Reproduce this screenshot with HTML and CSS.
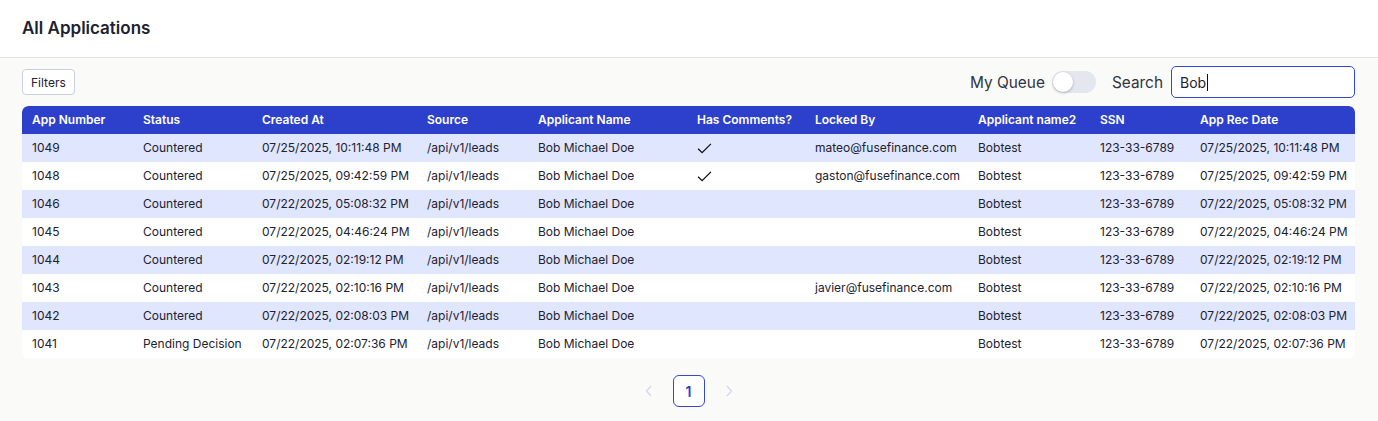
FILE: index.html
```html
<!DOCTYPE html>
<html>
<head>
<meta charset="utf-8">
<link rel="stylesheet" href="styles.css">
</head>
<body>
<header class="topbar"><h1 class="title">All Applications</h1></header>
<main class="content">
  <div class="toolbar">
    <button class="filters">Filters</button>
    <div class="tools-right">
      <span class="label">My Queue</span>
      <span class="toggle"><span class="knob"></span></span>
      <span class="label search-label">Search</span>
      <div class="search">Bob<span class="caret"></span></div>
    </div>
  </div>
  <table class="grid">
    <colgroup>
      <col style="width:111px"><col style="width:119px"><col style="width:165px"><col style="width:111px"><col style="width:159px"><col style="width:118px"><col style="width:163px"><col style="width:122px"><col style="width:100px"><col>
    </colgroup>
    <thead>
      <tr><th>App Number</th><th>Status</th><th>Created At</th><th>Source</th><th>Applicant Name</th><th>Has Comments?</th><th>Locked By</th><th>Applicant name2</th><th>SSN</th><th>App Rec Date</th></tr>
    </thead>
    <tbody>
      <tr><td>1049</td><td>Countered</td><td>07/25/2025, 10:11:48 PM</td><td>/api/v1/leads</td><td>Bob Michael Doe</td><td><svg class="check" viewBox="0 0 16 12" width="15" height="11"><path d="M1 6.2 L5.4 10.6 L15 1" fill="none" stroke="#111" stroke-width="1.4"/></svg></td><td>mateo@fusefinance.com</td><td>Bobtest</td><td>123-33-6789</td><td>07/25/2025, 10:11:48 PM</td></tr>
      <tr><td>1048</td><td>Countered</td><td>07/25/2025, 09:42:59 PM</td><td>/api/v1/leads</td><td>Bob Michael Doe</td><td><svg class="check" viewBox="0 0 16 12" width="15" height="11"><path d="M1 6.2 L5.4 10.6 L15 1" fill="none" stroke="#111" stroke-width="1.4"/></svg></td><td>gaston@fusefinance.com</td><td>Bobtest</td><td>123-33-6789</td><td>07/25/2025, 09:42:59 PM</td></tr>
      <tr><td>1046</td><td>Countered</td><td>07/22/2025, 05:08:32 PM</td><td>/api/v1/leads</td><td>Bob Michael Doe</td><td></td><td></td><td>Bobtest</td><td>123-33-6789</td><td>07/22/2025, 05:08:32 PM</td></tr>
      <tr><td>1045</td><td>Countered</td><td>07/22/2025, 04:46:24 PM</td><td>/api/v1/leads</td><td>Bob Michael Doe</td><td></td><td></td><td>Bobtest</td><td>123-33-6789</td><td>07/22/2025, 04:46:24 PM</td></tr>
      <tr><td>1044</td><td>Countered</td><td>07/22/2025, 02:19:12 PM</td><td>/api/v1/leads</td><td>Bob Michael Doe</td><td></td><td></td><td>Bobtest</td><td>123-33-6789</td><td>07/22/2025, 02:19:12 PM</td></tr>
      <tr><td>1043</td><td>Countered</td><td>07/22/2025, 02:10:16 PM</td><td>/api/v1/leads</td><td>Bob Michael Doe</td><td></td><td>javier@fusefinance.com</td><td>Bobtest</td><td>123-33-6789</td><td>07/22/2025, 02:10:16 PM</td></tr>
      <tr><td>1042</td><td>Countered</td><td>07/22/2025, 02:08:03 PM</td><td>/api/v1/leads</td><td>Bob Michael Doe</td><td></td><td></td><td>Bobtest</td><td>123-33-6789</td><td>07/22/2025, 02:08:03 PM</td></tr>
      <tr><td>1041</td><td>Pending Decision</td><td>07/22/2025, 02:07:36 PM</td><td>/api/v1/leads</td><td>Bob Michael Doe</td><td></td><td></td><td>Bobtest</td><td>123-33-6789</td><td>07/22/2025, 02:07:36 PM</td></tr>
    </tbody>
  </table>
  <nav class="pager">
    <span class="chev"><svg viewBox="0 0 8 12" width="8" height="12"><path d="M6 1 L1.5 6 L6 11" fill="none" stroke="#d4d8ee" stroke-width="1.3"/></svg></span>
    <span class="page">1</span>
    <span class="chev"><svg viewBox="0 0 8 12" width="8" height="12"><path d="M2 1 L6.5 6 L2 11" fill="none" stroke="#d4d8ee" stroke-width="1.3"/></svg></span>
  </nav>
</main>
</body>
</html>
```
FILE: styles.css
```css
* { box-sizing: border-box; }
html, body { margin: 0; padding: 0; }
body {
  font-family: Inter, "Noto Sans", sans-serif;
  background: #fafaf9;
  color: #1f2937;
  width: 1378px;
  height: 421px;
  overflow: hidden;
}
.topbar {
  background: #fff;
  height: 58px;
  border-bottom: 1px solid #e2e3e6;
  display: flex;
  align-items: center;
  padding: 0 22px;
}
.title {
  margin: 0;
  font-size: 17px;
  font-weight: 600;
  color: #1c2230;
  position: relative;
  top: -1px;
}
.content {
  padding: 8px 23px 0 22px;
}
.toolbar {
  display: flex;
  justify-content: space-between;
  align-items: flex-start;
  height: 40px;
}
.filters {
  margin-top: 3px;
  height: 26px;
  padding: 0 8px;
  border: 1px solid #c9cfe0;
  border-radius: 4px;
  background: #fff;
  font-family: Inter, sans-serif;
  font-size: 12px;
  color: #1c2230;
}
.tools-right {
  display: flex;
  align-items: center;
  height: 32px;
}
.label {
  font-size: 15.4px;
  color: #2f3442;
}
.toggle {
  margin-left: 7px;
  width: 44px;
  height: 22px;
  border-radius: 11px;
  background: #e4e7ee;
  display: flex;
  align-items: center;
  padding-left: 1px;
}
.knob {
  width: 20px;
  height: 20px;
  border-radius: 50%;
  background: #fff;
  box-shadow: 0 1px 3px rgba(0,0,0,0.25);
}
.search-label { margin-left: 16px; }
.search {
  margin-left: 8px;
  width: 184px;
  height: 32px;
  border: 1px solid #3447d4;
  border-radius: 5px;
  background: #fff;
  display: flex;
  align-items: center;
  padding-left: 8px;
  font-size: 14px;
  color: #1c2230;
}
.caret {
  display: inline-block;
  width: 1px;
  height: 17px;
  background: #111;
  margin-left: 1px;
}
.grid {
  width: 1333px;
  border-collapse: separate;
  border-spacing: 0;
  table-layout: fixed;
  font-size: 12px;
  background: #fff;
  border-radius: 6px;
  overflow: hidden;
}
.grid th {
  background: #2d40cc;
  color: #fff;
  font-weight: 600;
  text-align: left;
  height: 28px;
  padding: 0 10px 2px;
  white-space: nowrap;
}
.grid th:first-child { border-top-left-radius: 6px; }
.grid th:last-child { border-top-right-radius: 6px; }
.grid td {
  height: 28px;
  padding: 0 10px 1px;
  white-space: nowrap;
  color: #1c2230;
}
.grid tbody tr:nth-child(odd) td { background: #e0e6fd; }
.grid tbody tr:last-child td:first-child { border-bottom-left-radius: 6px; }
.grid tbody tr:last-child td:last-child { border-bottom-right-radius: 6px; }
.check { display: block; margin-top: 1px; }
.pager {
  display: flex;
  justify-content: center;
  align-items: center;
  gap: 20px;
  margin-top: 17px;
}
.chev { display: flex; width: 8px; }
.page {
  width: 32px;
  height: 32px;
  border: 1px solid #3447d4;
  border-radius: 6px;
  background: #fff;
  display: flex;
  align-items: center;
  justify-content: center;
  color: #2d40cc;
  font-size: 14px;
  font-weight: 600;
}
```
